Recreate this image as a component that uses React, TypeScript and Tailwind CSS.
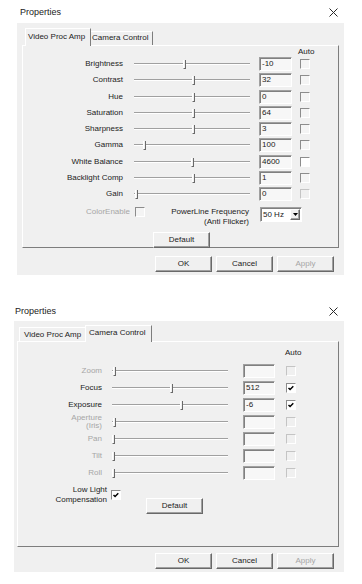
import React from "react";

const sunken =
  "border border-t-[#a0a0a0] border-l-[#a0a0a0] border-r-white border-b-white shadow-[inset_1px_1px_0_#808080]";
const raised =
  "border border-t-white border-l-white border-r-[#696969] border-b-[#696969] shadow-[inset_-1px_-1px_0_#a0a0a0]";

type Tone = "normal" | "white" | "dim";

function Slider({ thumb, className }: { thumb: number; className: string }) {
  return (
    <div className={`relative h-[10px] ${className}`}>
      <div className="absolute left-0 right-0 top-[4px] h-[2px] border-t border-[#a0a0a0] bg-white" />
      <div
        className="absolute top-[1px] h-[9px] w-[3px] border-l border-r border-b border-l-white border-r-[#696969] border-b-[#696969] bg-[#f0f0f0]"
        style={{ left: thumb - 1 }}
      />
    </div>
  );
}

function Edit({ value, className }: { value: string; className: string }) {
  return (
    <div className={`h-[14px] ${sunken} bg-[#f7f7f7] pl-[2px] leading-[12px] ${className}`}>{value}</div>
  );
}

function Check({ checked, tone = "normal", className = "" }: { checked?: boolean; tone?: Tone; className?: string }) {
  const look =
    tone === "white"
      ? "border-t-[#8c8c8c] border-l-[#8c8c8c] bg-white"
      : tone === "dim"
        ? "border-t-[#c4c4c4] border-l-[#c4c4c4] bg-[#f0f0f0]"
        : "border-t-[#8c8c8c] border-l-[#8c8c8c] bg-[#f4f4f4]";
  return (
    <div className={`h-[10px] w-[10px] shrink-0 border border-r-white border-b-white ${look} ${className}`}>
      {checked && (
        <svg width="8" height="8" viewBox="0 0 8 8">
          <path d="M1.5 3.9 L3.1 5.6 L6.3 2.2" fill="none" stroke="#000" strokeWidth="1.4" />
        </svg>
      )}
    </div>
  );
}

function Button({ label, className = "", disabled }: { label: string; className?: string; disabled?: boolean }) {
  return (
    <div
      className={`flex h-[16px] w-[57px] items-center justify-center bg-[#f0f0f0] ${raised} ${disabled ? "text-[#a6a6a6]" : ""} ${className}`}
    >
      {label}
    </div>
  );
}

function Close() {
  return (
    <svg width="9" height="9" viewBox="0 0 9 9" className="ml-auto mr-[24px]">
      <path d="M0.5 0.5 L8.5 8.5 M8.5 0.5 L0.5 8.5" stroke="#2a2a2a" strokeWidth="1" />
    </svg>
  );
}

const ampRows: { label: string; thumb: number; value: string; tone?: Tone }[] = [
  { label: "Brightness", thumb: 50, value: "-10" },
  { label: "Contrast", thumb: 59, value: "32" },
  { label: "Hue", thumb: 59, value: "0" },
  { label: "Saturation", thumb: 59, value: "64" },
  { label: "Sharpness", thumb: 59, value: "3" },
  { label: "Gamma", thumb: 10, value: "100" },
  { label: "White Balance", thumb: 58, value: "4600", tone: "white" },
  { label: "Backlight Comp", thumb: 59, value: "1" },
  { label: "Gain", thumb: 2, value: "0", tone: "dim" },
];

const camRows: { label: React.ReactNode; thumb: number; value: string; muted?: boolean; checked?: boolean }[] = [
  { label: "Zoom", thumb: 2, value: "", muted: true },
  { label: "Focus", thumb: 59, value: "512", checked: true },
  { label: "Exposure", thumb: 69, value: "-6", checked: true },
  {
    label: (
      <span className="leading-[8px]">
        Aperture
        <br />
        (Iris)
      </span>
    ),
    thumb: 2,
    value: "",
    muted: true,
  },
  { label: "Pan", thumb: 1, value: "", muted: true },
  { label: "Tilt", thumb: 1, value: "", muted: true },
  { label: "Roll", thumb: 1, value: "", muted: true },
];

function ButtonBar() {
  return (
    <div className="flex justify-end gap-[4px] pr-[5px]">
      <Button label="OK" />
      <Button label="Cancel" />
      <Button label="Apply" disabled />
    </div>
  );
}

function VideoProcAmp() {
  return (
    <div>
      <div className="mt-[6px] flex items-center pl-[20px] text-[9px] leading-[12px]">
        Properties
        <Close />
      </div>
      <div className="ml-[17px] mt-[5px] h-[252px] w-[327px] bg-[#f0f0f0] px-[5px] pt-[5px]">
        <div className="relative z-10 -mb-px flex h-[18px] items-end pl-[3px]">
          <div className="h-[18px] w-[66px] border-l border-t border-r border-l-white border-t-white border-r-[#7d7d7d] bg-[#f0f0f0] pl-[2px] pt-[2px] leading-[12px]">
            Video Proc Amp
          </div>
          <div className="mb-px h-[14px] w-[62px] border-t border-r border-t-white border-r-[#7d7d7d] pl-[1px] leading-[12px]">
            Camera Control
          </div>
        </div>
        <div className="h-[203px] border border-t-white border-l-white border-r-[#7d7d7d] border-b-[#7d7d7d]">
          <div className="ml-[275px] h-[10px] pt-[1px] leading-[10px]">Auto</div>
          {ampRows.map((r) => (
            <div key={r.label} className="flex h-[16.25px] items-center">
              <span className="w-[100px] text-right">{r.label}</span>
              <Slider thumb={r.thumb} className="ml-[11px] w-[116px]" />
              <Edit value={r.value} className="ml-[9px] w-[33px]" />
              <Check tone={r.tone} className="ml-[8px]" />
            </div>
          ))}
          <div className="mt-[5px] flex items-start">
            <span className="w-[107px] text-right leading-[10px] text-[#a6a6a6]">ColorEnable</span>
            <Check className="ml-[5px]" />
            <span className="w-[104px] text-right leading-[10px]">
              PowerLine Frequency
              <br />
              (Anti Flicker)
            </span>
            <div className={`ml-[11px] flex h-[15px] w-[42px] items-center bg-white ${sunken}`}>
              <span className="pl-[2px]">50 Hz</span>
              <div className={`ml-auto mr-[1px] flex h-[11px] w-[10px] items-center justify-center bg-[#f0f0f0] ${raised}`}>
                <svg width="5" height="3" viewBox="0 0 5 3">
                  <path d="M0 0 H5 L2.5 3 Z" fill="#000" />
                </svg>
              </div>
            </div>
          </div>
          <Button label="Default" className="ml-[130px] mt-[5px] h-[15px]" />
        </div>
        <div className="mt-[8px]">
          <ButtonBar />
        </div>
      </div>
    </div>
  );
}

function CameraControl() {
  return (
    <div>
      <div className="mt-[30px] flex items-center pl-[15px] text-[9px] leading-[12px]">
        Properties
        <Close />
      </div>
      <div className="ml-[14px] mt-[4px] h-[251px] w-[330px] bg-[#f0f0f0] pl-[3px] pr-[5px] pt-[4px]">
        <div className="relative z-10 -mb-px flex h-[17px] items-end pl-[2px]">
          <div className="mb-px h-[14px] w-[66px] border-l border-t border-l-white border-t-white pl-[4px] pt-[1px] leading-[12px]">
            Video Proc Amp
          </div>
          <div className="h-[17px] w-[67px] border-l border-t border-r border-l-white border-t-white border-r-[#7d7d7d] bg-[#f0f0f0] pl-[3px] pt-[1px] leading-[12px]">
            Camera Control
          </div>
        </div>
        <div className="h-[206px] border border-t-white border-l-white border-r-[#7d7d7d] border-b-[#7d7d7d]">
          <div className="ml-[267px] h-[20px] pt-[6px] leading-[10px]">Auto</div>
          {camRows.map((r, i) => (
            <div key={i} className="flex h-[17px] items-center">
              <span className={`flex w-[84px] justify-end text-right ${r.muted ? "text-[#a6a6a6]" : ""}`}>{r.label}</span>
              <Slider thumb={r.thumb} className="ml-[10px] w-[116px]" />
              <Edit value={r.value} className="ml-[15px] w-[32px]" />
              <Check checked={r.checked} tone={r.checked ? "white" : "dim"} className="ml-[11px]" />
            </div>
          ))}
          <div className="mt-[4px] flex items-start">
            <span className="w-[89px] text-right leading-[10px]">
              Low Light
              <br />
              Compensation
            </span>
            <Check checked tone="white" className="ml-[4px] mt-[5px]" />
            <Button label="Default" className="ml-[25px] mt-[13px] h-[15px]" />
          </div>
        </div>
        <div className="mt-[6px]">
          <ButtonBar />
        </div>
      </div>
    </div>
  );
}

export default function App() {
  return (
    <div className="h-[584px] w-[362px] overflow-hidden bg-white font-['Liberation_Sans',Arial,sans-serif] text-[8px] text-[#222]">
      <VideoProcAmp />
      <CameraControl />
    </div>
  );
}
